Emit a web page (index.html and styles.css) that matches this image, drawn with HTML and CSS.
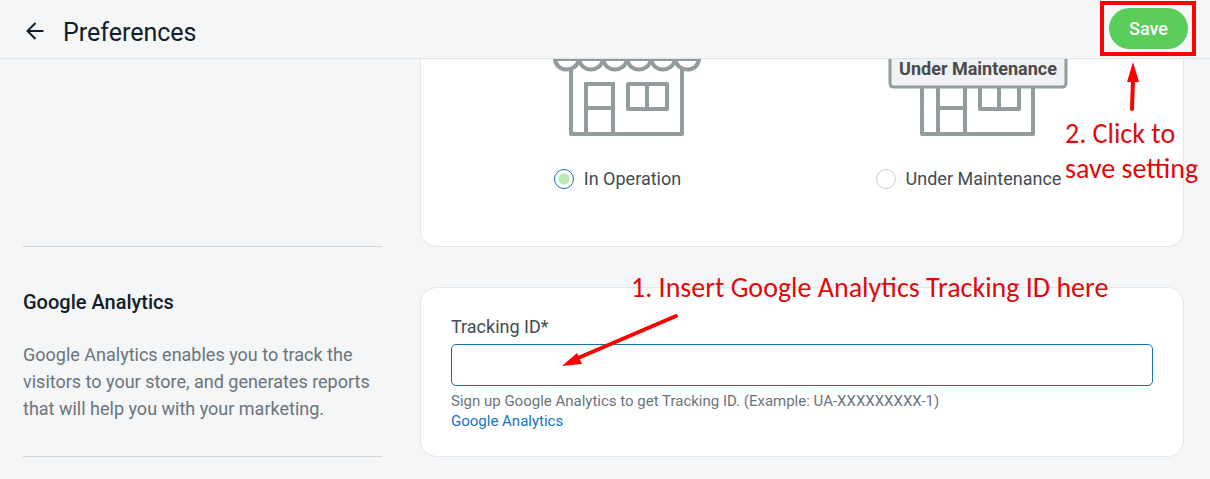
FILE: index.html
```html
<!DOCTYPE html>
<html lang="en">
<head>
    <meta charset="UTF-8">
    <meta name="viewport" content="width=device-width, initial-scale=1.0">
    <title>Preferences</title>
    <link rel="stylesheet" href="styles.css">
</head>
<body>

<header class="topbar">
    <a href="#" class="back" aria-label="Back">
        <svg width="18" height="18" viewBox="0 0 18 18" fill="none" stroke="#10202a" stroke-width="2">
            <path d="M17.5 9H2M9.5 1L1.5 9l8 8"/>
        </svg>
    </a>
    <h1>Preferences</h1>
    <div class="save">
        <button type="submit" form="preferences" class="btn-save">Save</button>
        <div class="highlight"></div>
        <div class="note note-save">
            <svg width="14" height="50" viewBox="0 0 14 50">
                <path d="M6 46L7 16" stroke="#fe0000" stroke-width="4" stroke-linecap="round"/>
                <path d="M7 -1l6 20H1z" fill="#fe0000"/>
            </svg>
            <p>2. Click to<br>save setting</p>
        </div>
    </div>
</header>

<form id="preferences" class="settings">
    <section class="row">
        <div class="info"></div>
        <div class="card status">
            <div class="option">
                <!-- Open store -->
                <svg width="150" height="78" viewBox="0 0 150 78" fill="none" stroke="#939c9c" stroke-width="4">
                    <path d="M1 1h148" stroke-width="2"/>
                    <path d="M3 0c1 14 22 14 24 0c2 14 22 14 24 0c2 14 22 14 24 0c2 14 22 14 24 0c2 14 22 14 24 0c2 14 23 14 24 0"/>
                    <path d="M19 10v65h111V10" stroke-linejoin="round"/>
                    <path d="M34 75V25h27v50M34 49h27"/>
                    <path d="M76 25h39v25H76zM95 25v25" stroke-linejoin="round"/>
                </svg>
                <label><input type="radio" name="status" checked> In Operation</label>
            </div>
            <div class="option">
                <!-- Closed store -->
                <svg width="180" height="78" viewBox="0 0 180 78" fill="none" stroke="#939c9c" stroke-width="4">
                    <path d="M34 28v47h111V28" stroke-linejoin="round"/>
                    <path d="M50 75V28M77 28v47M50 49h27"/>
                    <path d="M92 28v22h39V28M111 28v22" stroke-linejoin="round"/>
                    <path d="M2 -8v32q0 4 4 4h168q4 0 4-4V-8" fill="#f0f2f5" stroke-width="3"/>
                    <text x="90" y="16" class="sign">Under Maintenance</text>
                </svg>
                <label><input type="radio" name="status"> Under Maintenance</label>
            </div>
        </div>
    </section>

    <section class="row">
        <div class="info">
            <h2>Google Analytics</h2>
            <p>Google Analytics enables you to track the visitors to your store, and generates reports that will help you with your marketing.</p>
        </div>
        <div class="card tracking">
            <label for="tracking-id">Tracking ID*</label>
            <input type="text" id="tracking-id">
            <p class="hint">Sign up Google Analytics to get Tracking ID. (Example: UA-XXXXXXXXX-1)</p>
            <a href="#">Google Analytics</a>
            <div class="note note-tracking">
                <p>1. Insert Google Analytics Tracking ID here</p>
                <svg width="118" height="56" viewBox="0 0 118 56">
                    <path d="M114 3L16 45" stroke="#fe0000" stroke-width="4" stroke-linecap="round"/>
                    <path d="M0 53L15 40l5 11z" fill="#fe0000"/>
                </svg>
            </div>
        </div>
    </section>
</form>

</body>
</html>
```
FILE: styles.css
```css
* {
    box-sizing: border-box;
}

body {
    font-family: Roboto, sans-serif;
    font-size: 18px;
    margin: 0;
    background: #f4f6f8;
    color: #424b54;
}

h1, h2, p {
    margin: 0;
}

a {
    color: #1573c8;
    text-decoration: none;
}

/* Top bar */
.topbar {
    display: flex;
    align-items: center;
    position: relative;
    z-index: 10;
    height: 59px;
    padding: 4px 22px 0 26px;
    background: #f4f6f8;
    border-bottom: 1px solid #e2e5e8;
}

.back {
    display: flex;
    margin-right: 19px;
}

h1 {
    font-size: 25px;
    font-weight: 400;
    line-height: 32px;
    color: #10202a;
    padding-top: 4px;
}

.save {
    position: relative;
    margin: 0 0 6px auto;
}

.btn-save {
    display: block;
    width: 79px;
    height: 41px;
    border: none;
    border-radius: 21px;
    background: #5acd5a;
    color: #fff;
    font: 500 18px Roboto, sans-serif;
    cursor: pointer;
}

.highlight {
    position: absolute;
    top: -7px;
    right: -8px;
    bottom: -7px;
    left: -9px;
    border: 4px solid #fe0000;
    pointer-events: none;
}

/* Settings */
.settings {
    display: flex;
    flex-direction: column;
    gap: 40px;
    padding: 0 26px 22px 23px;
}

.row {
    display: grid;
    grid-template-columns: minmax(0, 359px) minmax(0, 1fr);
    gap: 38px;
}

.info {
    border-bottom: 1px solid #d0d4d7;
}

.info h2 {
    font-size: 20px;
    font-weight: 500;
    line-height: 30px;
    color: #10202a;
}

.info p {
    margin-top: 24px;
    line-height: 27px;
    color: #6a747c;
}

.card {
    position: relative;
    background: #fff;
    border: 1px solid #e4e7ea;
    border-radius: 16px;
    padding: 26px 30px 25px;
}

.status {
    display: grid;
    grid-template-columns: 1fr 1fr;
    padding-top: 0;
    padding-bottom: 54px;
    border-top: none;
    border-radius: 0 0 16px 16px;
}

.option {
    display: flex;
    flex-direction: column;
    align-items: center;
    gap: 28px;
}

.option svg {
    overflow: visible;
}

.option label {
    display: flex;
    align-items: center;
    gap: 10px;
    margin-right: 18px;
    line-height: 27px;
}

.option input {
    appearance: none;
    width: 20px;
    height: 20px;
    margin: 0;
    border: 1px solid #ccd0d3;
    border-radius: 50%;
    background: #fff;
}

.option input:checked {
    border-color: #1573b8;
    background: radial-gradient(circle, #b9e9b5 5px, #fff 6px);
}

.sign {
    font: 700 18px Roboto, sans-serif;
    fill: #4a4a4a;
    stroke: none;
    text-anchor: middle;
}

.tracking label {
    display: block;
    line-height: 26px;
}

.tracking input {
    display: block;
    width: 100%;
    height: 42px;
    margin: 4px 0 5px;
    padding: 0 12px;
    border: 1px solid #1573b8;
    border-radius: 5px;
    font: 18px Roboto, sans-serif;
}

.tracking .hint, .tracking a {
    display: block;
    font-size: 15px;
    line-height: 20px;
}

.hint {
    color: #6a747c;
}

/* Notes */
.note {
    position: absolute;
    font-family: Carlito, Lato, sans-serif;
    font-size: 28px;
    line-height: 35px;
    color: #e00a0a;
    white-space: nowrap;
    pointer-events: none;
}

.note svg {
    display: block;
    overflow: visible;
}

.note-save {
    top: 55px;
    left: -44px;
}

.note-save svg {
    margin: 0 0 3px 61px;
}

.note-tracking {
    top: -18px;
    left: 141px;
}

.note-tracking p {
    margin-left: 69px;
}

.note-tracking svg {
    margin-top: 8px;
}
```
